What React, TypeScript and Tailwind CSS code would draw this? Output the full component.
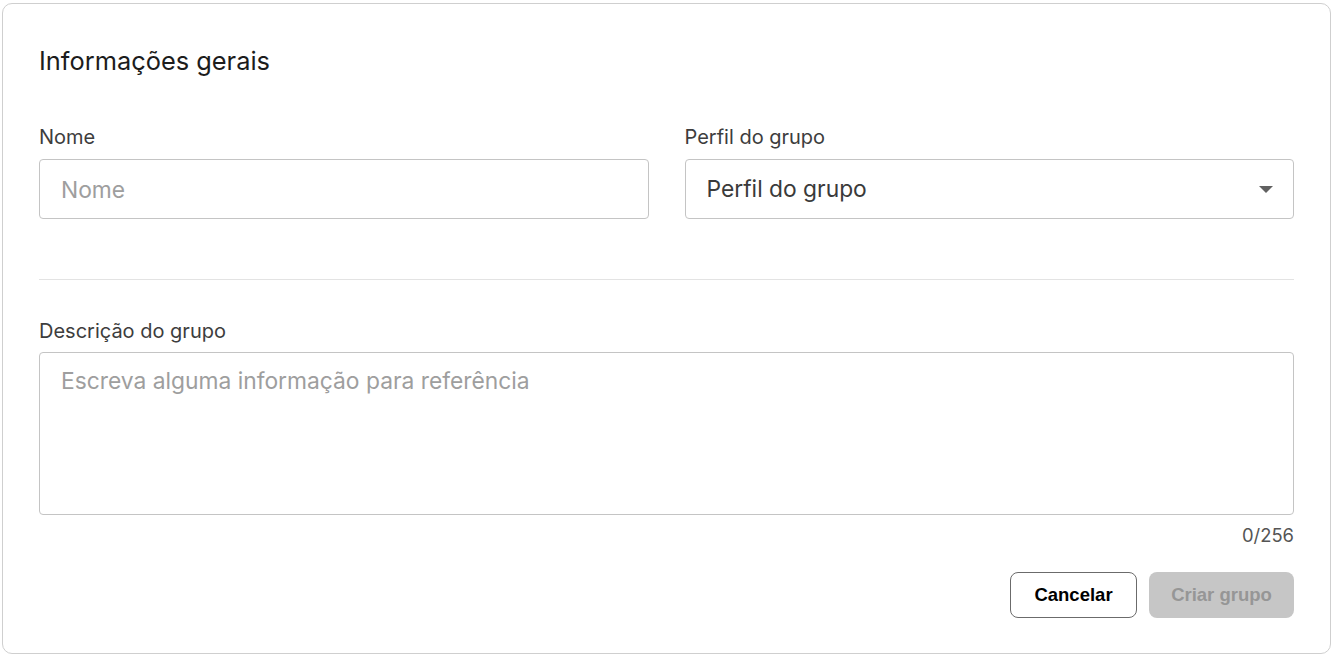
import { useState } from "react"

export default function App() {
  const [nome, setNome] = useState("")
  const [descricao, setDescricao] = useState("")

  return (
    <div className="min-h-screen bg-white pl-[2px] pt-[3px]" style={{ fontFamily: "Inter, 'Noto Sans', sans-serif" }}>
      <div className="w-[1329px] h-[651px] border border-[#cfcfcf] rounded-[10px] px-[36px] pt-[41px]">
        {/* Header */}
        <h2 className="text-[25.4px] leading-[32px] text-[#1c1c1c] font-normal">Informações gerais</h2>

        <div className="grid grid-cols-2 gap-[36px] mt-[48px]">
          <div>
            <label className="block text-[20px] leading-[24px] text-[#3d3d3d] mb-[10px]">Nome</label>
            <input
              type="text"
              value={nome}
              onChange={(e) => setNome(e.target.value)}
              placeholder="Nome"
              className="w-full h-[60px] border border-[#c4c4c4] rounded-[4px] px-[21px] text-[22.8px] text-[#333] placeholder:text-[#9e9e9e] outline-none"
            />
          </div>
          <div>
            <label className="block text-[20px] leading-[24px] text-[#3d3d3d] mb-[10px]">Perfil do grupo</label>
            <button className="w-full h-[60px] border border-[#c4c4c4] rounded-[4px] pl-[21px] pr-[20px] flex items-center justify-between text-[22.8px] text-[#3a3a3a]">
              <span>Perfil do grupo</span>
              <svg width="14" height="7" viewBox="0 0 14 7">
                <path d="M0 0h14L7 7z" fill="#616161" />
              </svg>
            </button>
          </div>
        </div>

        <div className="h-px bg-[#e3e3e3] mt-[60px]" />

        {/* Description */}
        <div className="mt-[39px]">
          <label className="block text-[20px] leading-[24px] text-[#3d3d3d] mb-[9px]">Descrição do grupo</label>
          <textarea
            value={descricao}
            onChange={(e) => setDescricao(e.target.value.slice(0, 256))}
            placeholder="Escreva alguma informação para referência"
            className="block w-full h-[163px] border border-[#c4c4c4] rounded-[4px] px-[21px] py-[14px] text-[22.8px] leading-[28px] text-[#333] placeholder:text-[#9e9e9e] outline-none resize-none"
          />
          <p className="text-right text-[18.4px] leading-[24px] text-[#555] mt-[8px]">{descricao.length}/256</p>
        </div>

        {/* Actions */}
        <div className="flex justify-end gap-[12px] mt-[25px]" style={{ fontFamily: "'Liberation Sans', Arial, sans-serif" }}>
          <button className="w-[127px] h-[46px] border border-[#6b6b6b] rounded-[8px] bg-white text-[18.5px] font-bold text-black">
            Cancelar
          </button>
          <button disabled className="w-[145px] h-[46px] rounded-[8px] bg-[#c6c6c6] text-[18.5px] font-bold text-[#969696]">
            Criar grupo
          </button>
        </div>
      </div>
    </div>
  )
}
